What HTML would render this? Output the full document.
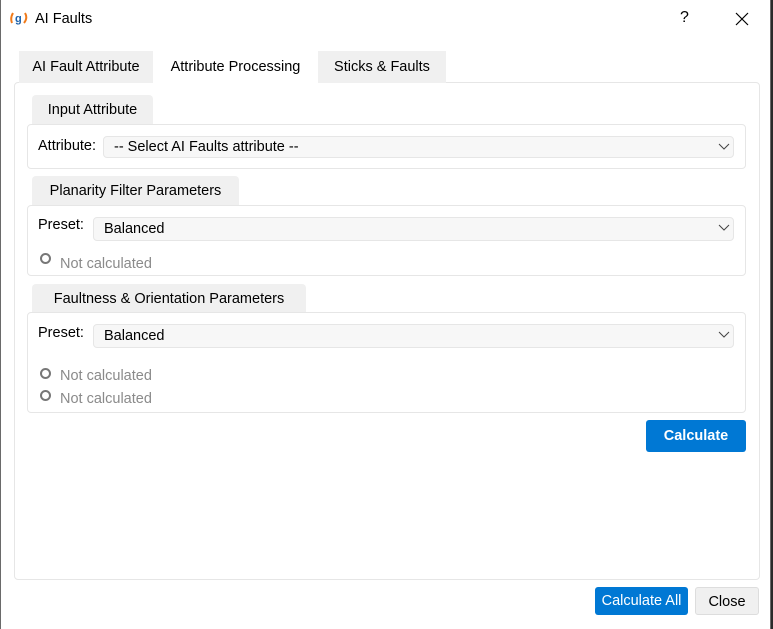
<!DOCTYPE html>
<html><head><style>
*{box-sizing:border-box;margin:0;padding:0}
body{width:773px;height:629px;background:#2a2a2a;position:relative;overflow:hidden;font-family:"Liberation Sans",sans-serif;color:#000}
.win{position:absolute;left:0;top:0;width:771px;height:629px;background:#fff;box-shadow:inset 1px 0 0 #6a6a6a,inset -1px 0 0 #6a6a6a}
.a{position:absolute}
.t{font-size:14.5px;white-space:nowrap}
.tab{position:absolute;top:51px;height:32px;background:#f0f0f0;font-size:14.5px;text-align:center;line-height:32px;white-space:nowrap}
.panel{position:absolute;left:14px;top:82px;width:746px;height:498px;border:1px solid #e6e6e6;border-radius:4px}
.gt{position:absolute;left:32px;height:31px;background:#f0f0f0;border-radius:4px 4px 0 0;font-size:14.5px;text-align:center;line-height:31px;white-space:nowrap}
.box{position:absolute;left:27px;width:719px;border:1px solid #e6e6e6;border-radius:4px;background:#fff}
.combo{position:absolute;height:22px;background:#f7f7f7;border:1px solid #e6e6e6;border-radius:4px;font-size:14.5px;line-height:20px;padding-left:10px;white-space:nowrap}
.combo svg{position:absolute;right:3px;top:5px}
.lbl{position:absolute;font-size:14.5px}
.rad{position:absolute;left:40px;width:11px;height:11px;border:2px solid #777;border-radius:50%}
.nc{position:absolute;left:60px;font-size:14.5px;color:#8a8a8a}
.btn{position:absolute;border-radius:3px;font-size:14.5px;text-align:center;white-space:nowrap}
</style></head><body>
<div class="win">
<svg class="a" style="left:9px;top:11px" width="20" height="15" viewBox="0 0 20 15"><path d="M4 2 Q1 7 3 12" stroke="#f07a1a" stroke-width="2" fill="none"/><path d="M16 2 Q19 7 15 12" stroke="#f07a1a" stroke-width="2" fill="none"/><text x="6" y="11" font-size="11" font-weight="bold" fill="#1a5fa8" font-family="Liberation Sans">g</text></svg>
<div class="a t" style="left:35px;top:11px">AI Faults</div>
<div class="a" style="left:680px;top:9px;font-size:16px">?</div>
<svg class="a" style="left:735px;top:12px" width="14" height="14"><path d="M1 1L13 13M13 1L1 13" stroke="#000" stroke-width="1.2"/></svg>
<div class="panel"></div>
<div class="tab" style="left:19px;width:134px">AI Fault Attribute</div>
<div class="tab" style="left:153px;width:165px;background:#fff;height:33px">Attribute Processing</div>
<div class="tab" style="left:318px;width:128px">Sticks &amp; Faults</div>

<div class="gt" style="top:95px;width:121px">Input Attribute</div>
<div class="box" style="top:124px;height:45px"></div>
<div class="lbl" style="left:38px;top:138px">Attribute:</div>
<div class="combo" style="left:103px;top:136px;width:631px">-- Select AI Faults attribute --<svg width="12" height="10"><path d="M1 2L6 7L11 2" stroke="#444" fill="none"/></svg></div>

<div class="gt" style="top:176px;width:207px">Planarity Filter Parameters</div>
<div class="box" style="top:205px;height:71px"></div>
<div class="lbl" style="left:38px;top:217px">Preset:</div>
<div class="combo" style="left:93px;top:217px;width:641px;height:24px;line-height:22px">Balanced<svg width="12" height="10"><path d="M1 2L6 7L11 2" stroke="#444" fill="none"/></svg></div>
<div class="rad" style="top:253px"></div>
<div class="nc" style="top:256px">Not calculated</div>

<div class="gt" style="top:284px;width:274px">Faultness &amp; Orientation Parameters</div>
<div class="box" style="top:312px;height:101px"></div>
<div class="lbl" style="left:38px;top:325px">Preset:</div>
<div class="combo" style="left:93px;top:324px;width:641px;height:24px;line-height:22px">Balanced<svg width="12" height="10"><path d="M1 2L6 7L11 2" stroke="#444" fill="none"/></svg></div>
<div class="rad" style="top:368px"></div>
<div class="nc" style="top:368px">Not calculated</div>
<div class="rad" style="top:390px"></div>
<div class="nc" style="top:391px">Not calculated</div>

<div class="btn" style="left:646px;top:420px;width:100px;height:32px;line-height:32px;background:#0078d4;color:#fff;font-weight:bold">Calculate</div>
<div class="btn" style="left:595px;top:587px;width:93px;height:28px;line-height:28px;background:#0078d4;color:#fff">Calculate All</div>
<div class="btn" style="left:695px;top:587px;width:64px;height:28px;line-height:28px;background:#f0f0f0;border:1px solid #ddd">Close</div>
</div>
</body></html>
